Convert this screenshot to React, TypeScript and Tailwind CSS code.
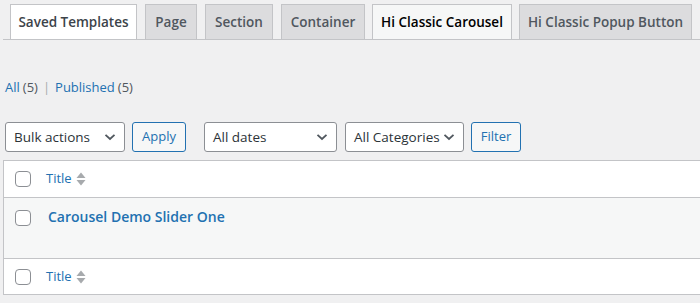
const font = { fontFamily: '"Open Sans", "Noto Sans", sans-serif' };

function Chevron() {
  return (
    <svg width="12" height="8" viewBox="0 0 12 8" className="shrink-0">
      <path d="M1.5 1.8 L6 6 L10.5 1.8" fill="none" stroke="#50575e" strokeWidth="1.8" />
    </svg>
  );
}

function SortIcon() {
  return (
    <svg width="10" height="16" viewBox="0 0 10 16" className="ml-[4px]">
      <path d="M0.5 7 L5 1.5 L9.5 7 Z" fill="#a7aaad" />
      <path d="M0.5 9 L5 14.5 L9.5 9 Z" fill="#a7aaad" />
    </svg>
  );
}

function Checkbox() {
  return <div className="h-[16px] w-[16px] shrink-0 rounded-[4px] border border-[#8c8f94] bg-white" />;
}

function Select({ label, w }: { label: string; w: string }) {
  return (
    <div className={`${w} flex h-[30px] items-center justify-between rounded-[3px] border border-[#8c8f94] bg-white pl-[8px] pr-[8px] text-[13.5px] text-[#2c3338]`}>
      <span className="whitespace-nowrap">{label}</span>
      <Chevron />
    </div>
  );
}

function Button({ label, w }: { label: string; w: string }) {
  return (
    <div className={`${w} flex h-[30px] items-center justify-center rounded-[3px] border border-[#2271b1] bg-[#f6f7f7] text-[13px] text-[#2271b1]`}>
      {label}
    </div>
  );
}

const tabs = [
  { label: "Saved Templates", w: "w-[127px]", m: "ml-0", cls: "bg-white text-[#3c434a]" },
  { label: "Page", w: "w-[52px]", m: "ml-[8px]", cls: "bg-[#dcdcde] text-[#50575e]" },
  { label: "Section", w: "w-[68px]", m: "ml-[8px]", cls: "bg-[#dcdcde] text-[#50575e]" },
  { label: "Container", w: "w-[84px]", m: "ml-[8px]", cls: "bg-[#dcdcde] text-[#50575e]" },
  { label: "Hi Classic Carousel", w: "w-[140px]", m: "ml-[7px]", cls: "bg-[#f6f7f7] text-[#000000]" },
  { label: "Hi Classic Popup Button", w: "w-[173px]", m: "ml-[7px]", cls: "bg-[#dcdcde] text-[#50575e]" },
];

export default function App() {
  return (
    <div className="h-[303px] w-[700px] overflow-hidden bg-[#f0f0f1]" style={font}>
      <div className="ml-[3px] flex border-b border-[#c3c4c7] pl-[7px] pt-[4px]">
        {tabs.map((t) => (
          <div
            key={t.label}
            className={`${t.w} ${t.m} ${t.cls} flex h-[35px] shrink-0 items-center justify-center whitespace-nowrap border border-b-0 border-[#c3c4c7] text-[13.5px] font-semibold`}
          >
            {t.label}
          </div>
        ))}
      </div>

      <div className="ml-[5px] mt-[38px] flex h-[20px] items-center text-[13px] text-[#50575e]">
        <span className="text-[#2271b1]">All</span>
        <span className="ml-[3px]">(5)</span>
        <span className="mx-[5px] text-[#a7aaad]">|</span>
        <span className="text-[#2271b1]">Published</span>
        <span className="ml-[3px]">(5)</span>
      </div>

      <div className="ml-[5px] mt-[24px] flex items-center">
        <Select label="Bulk actions" w="w-[120px]" />
        <div className="ml-[7px]">
          <Button label="Apply" w="w-[54px]" />
        </div>
        <div className="ml-[18px]">
          <Select label="All dates" w="w-[133px]" />
        </div>
        <div className="ml-[8px]">
          <Select label="All Categories" w="w-[119px]" />
        </div>
        <div className="ml-[7px]">
          <Button label="Filter" w="w-[50px]" />
        </div>
      </div>

      <div className="ml-[3px] mt-[8px] border-y border-l border-[#c3c4c7]">
        <div className="flex h-[36px] items-center bg-white pl-[11px]">
          <Checkbox />
          <span className="ml-[15px] text-[13px] text-[#2271b1]">Title</span>
          <SortIcon />
        </div>
        <div className="flex h-[62px] items-start border-y border-[#c3c4c7] bg-[#f6f7f7] pl-[11px] pt-[12px]">
          <Checkbox />
          <span className="ml-[17px] -mt-[4px] text-[14px] font-semibold text-[#2271b1]">Carousel Demo Slider One</span>
        </div>
        <div className="flex h-[35px] items-center bg-white pl-[11px]">
          <Checkbox />
          <span className="ml-[15px] text-[13px] text-[#2271b1]">Title</span>
          <SortIcon />
        </div>
      </div>
    </div>
  );
}
